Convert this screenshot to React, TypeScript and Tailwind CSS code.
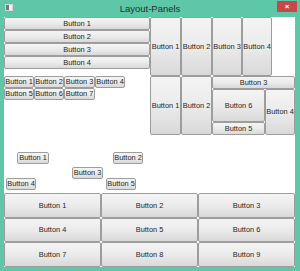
import React from 'react';

const btn =
  'flex items-center justify-center border border-[#9d9d9d] rounded-[2px] bg-gradient-to-b from-[#f4f4f4] via-[#ebebeb] to-[#d9d9d9] text-[#1e1e1e] leading-none whitespace-nowrap overflow-hidden';

function Btn({ label, className = '' }: { label: string; className?: string }) {
  return <div className={`${btn} ${className}`}>{label}</div>;
}

export default function App() {
  const canvasButtons = [
    { label: 'Button 1', pos: 'left-[13px] top-[17px] w-[32px]' },
    { label: 'Button 2', pos: 'left-[109px] top-[17px] w-[30px]' },
    { label: 'Button 3', pos: 'left-[68px] top-[32px] w-[31px]' },
    { label: 'Button 4', pos: 'left-[2px] top-[43px] w-[30px]' },
    { label: 'Button 5', pos: 'left-[102px] top-[43px] w-[30px]' },
  ];

  const horiz = [
    { label: 'Button 1', w: 'w-[31px]' },
    { label: 'Button 2', w: 'w-[31px]' },
    { label: 'Button 3', w: 'w-[30px]' },
    { label: 'Button 4', w: 'w-[30px]' },
  ];

  const wrap = [
    { label: 'Button 1', w: 'w-[30px]' },
    { label: 'Button 2', w: 'w-[30px]' },
    { label: 'Button 3', w: 'w-[31px]' },
    { label: 'Button 4', w: 'w-[30px]' },
    { label: 'Button 5', w: 'w-[30px]' },
    { label: 'Button 6', w: 'w-[30px]' },
    { label: 'Button 7', w: 'w-[31px]' },
  ];

  return (
    <div
      className="w-[300px] h-[271px] bg-[#5dc7a8] flex flex-col text-[7.4px]"
      style={{ fontFamily: '"Liberation Sans", Arial, sans-serif' }}
    >
      {/* Title bar */}
      <div className="h-[17px] relative flex items-center justify-center">
        <div className="absolute left-[5px] top-[4px] w-[8px] h-[7px] bg-[#f2f2f2] border border-[#d6d6d6] flex">
          <div className="w-[3px] h-full bg-[#6b7b76]" />
        </div>
        <span className="text-[9.5px] text-[#22332e] mt-[1px]">Layout-Panels</span>
        <div className="absolute right-[3px] top-[1px] w-[20px] h-[11px] bg-[#c74848] flex items-center justify-center text-white text-[8px] font-bold">
          ×
        </div>
      </div>

      {/* Client area */}
      <div className="ml-[4px] w-[291px] h-[250px] bg-white grid grid-cols-[146px_145px] grid-rows-[59px_59px_58px_74px]">
        {/* StackPanel vertical */}
        <div className="flex flex-col">
          {['Button 1', 'Button 2', 'Button 3', 'Button 4'].map((b) => (
            <Btn key={b} label={b} className="h-[13px]" />
          ))}
        </div>

        {/* StackPanel horizontal */}
        <div className="flex">
          {horiz.map((b) => (
            <Btn key={b.label} label={b.label} className={`h-full ${b.w}`} />
          ))}
        </div>

        {/* WrapPanel */}
        <div className="flex flex-wrap content-start w-[125px]">
          {wrap.map((b) => (
            <Btn key={b.label} label={b.label} className={`h-[12px] ${b.w}`} />
          ))}
        </div>

        {/* DockPanel */}
        <div className="flex">
          <Btn label="Button 1" className="h-full w-[31px]" />
          <Btn label="Button 2" className="h-full w-[31px]" />
          <div className="flex-1 flex flex-col">
            <Btn label="Button 3" className="h-[13px]" />
            <div className="flex-1 flex">
              <div className="flex-1 flex flex-col">
                <Btn label="Button 6" className="flex-1" />
                <Btn label="Button 5" className="h-[13px]" />
              </div>
              <Btn label="Button 4" className="w-[30px] h-full" />
            </div>
          </div>
        </div>

        {/* Canvas */}
        <div className="relative">
          {canvasButtons.map((b) => (
            <Btn key={b.label} label={b.label} className={`absolute h-[12px] ${b.pos}`} />
          ))}
        </div>
        <div />

        {/* UniformGrid */}
        <div className="col-span-2 grid grid-cols-3 grid-rows-3">
          {Array.from({ length: 9 }, (_, i) => (
            <Btn key={i} label={`Button ${i + 1}`} className="h-full" />
          ))}
        </div>
      </div>
    </div>
  );
}
